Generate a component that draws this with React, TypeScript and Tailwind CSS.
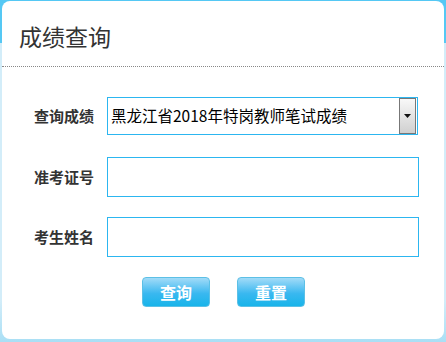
import React from 'react'

const cjk = '"Noto Sans CJK SC", "Liberation Sans", sans-serif'

function Row({ label, children }: { label: string; children: React.ReactNode }) {
  return (
    <div className="flex items-center">
      <div className="w-[105px] pl-[32px] text-[15px] font-bold text-[#333]">{label}</div>
      {children}
    </div>
  )
}

export default function App() {
  return (
    <div
      className="w-[446px] h-[342px] pt-[1px] px-[2px] pb-[3px] bg-[linear-gradient(to_bottom,#55c8f4_0px,#55c8f4_43px,#d3edf9_43px,#d3edf9_300px,#a9dff5_342px)]"
      style={{ fontFamily: cjk }}
    >
      <div className="h-full bg-white rounded-[8px] flex flex-col">
        <div className="h-[66px] border-b border-dotted border-[#888] pl-[17px] pt-[20px] text-[23px] leading-[30px] text-[#333]">
          成绩查询
        </div>
        <div className="flex flex-col pt-[30px]">
          <Row label="查询成绩">
            <div className="w-[311px] h-[38px] border border-[#2cb6f0] flex items-center justify-between pl-[3px] pr-[1px]">
              <span className="text-[15.5px] text-black">黑龙江省2018年特岗教师笔试成绩</span>
              <div className="w-[17px] h-[36px] border border-[#777] bg-[linear-gradient(to_bottom,#f8f8f8,#d0d0d0)] flex items-center justify-center">
                <svg width="7" height="4" viewBox="0 0 7 4">
                  <path d="M0 0H7L3.5 4Z" fill="#111" />
                </svg>
              </div>
            </div>
          </Row>
          <div className="mt-[22px]">
            <Row label="准考证号">
              <input className="w-[312px] h-[40px] border border-[#2cb6f0] outline-none px-2" />
            </Row>
          </div>
          <div className="mt-[20px]">
            <Row label="考生姓名">
              <input className="w-[312px] h-[40px] border border-[#2cb6f0] outline-none px-2" />
            </Row>
          </div>
        </div>
        <div className="flex gap-[27px] pl-[140px] pt-[20px]">
          {['查询', '重置'].map(t => (
            <button
              key={t}
              className="w-[68px] h-[30px] rounded-[4px] border border-[#5cc0e6] bg-[linear-gradient(to_bottom,#a2dbf8,#3ab8f0_55%,#18b4ea)] text-white font-bold text-[16px] leading-none"
            >
              {t}
            </button>
          ))}
        </div>
      </div>
    </div>
  )
}
